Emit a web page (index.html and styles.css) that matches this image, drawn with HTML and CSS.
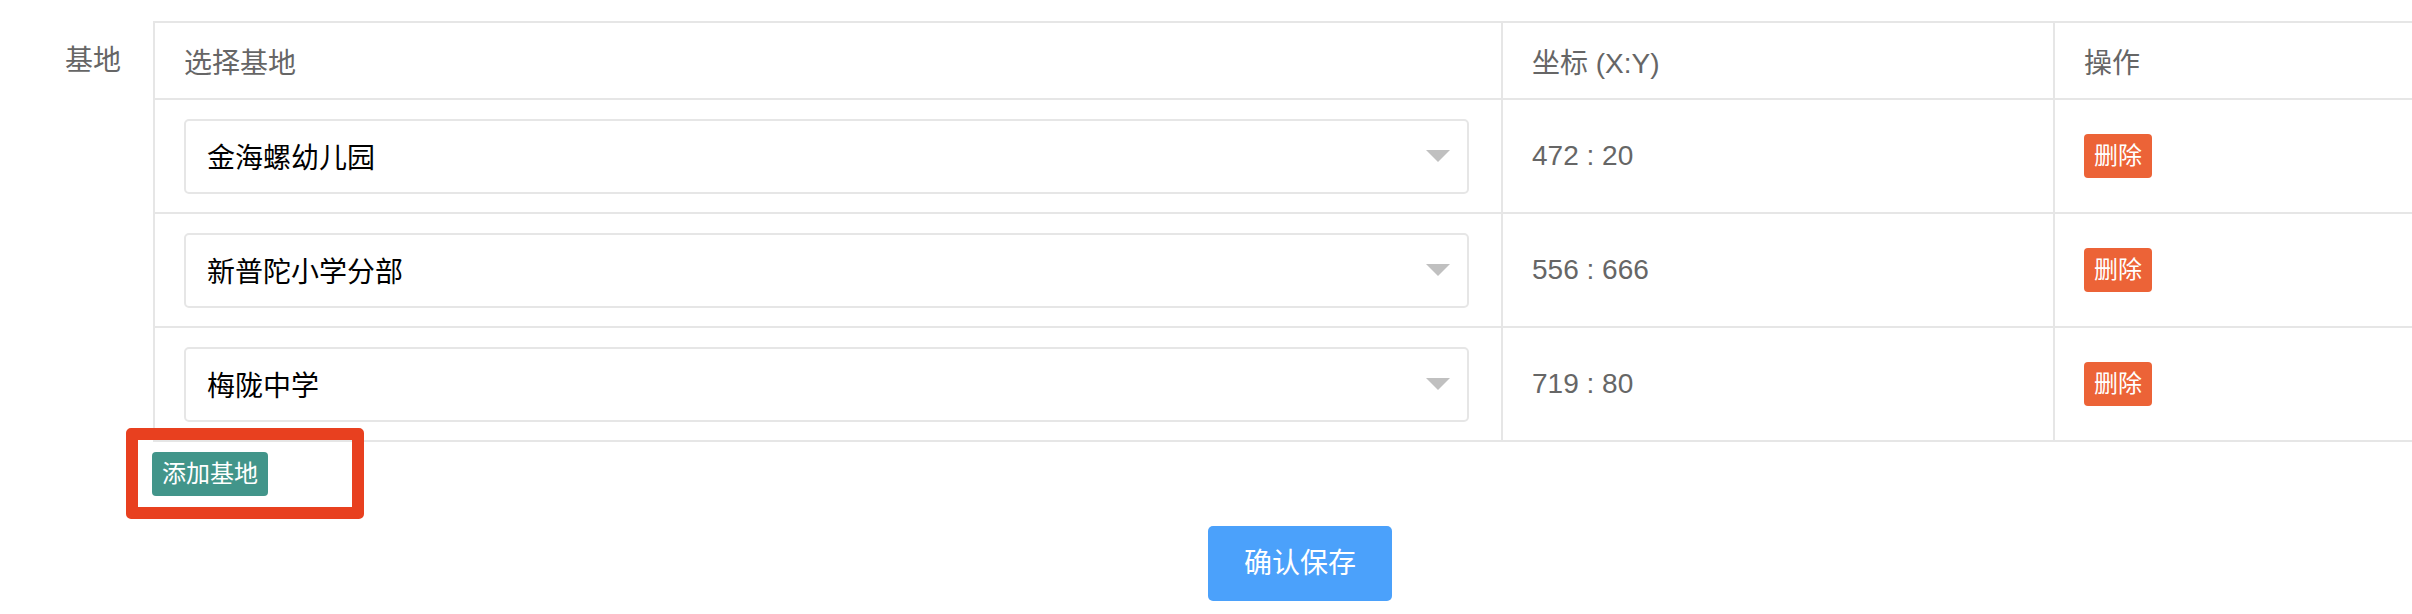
FILE: index.html
```html
<!DOCTYPE html>
<html lang="zh">
<head>
<meta charset="utf-8">
<title>基地</title>
<link rel="stylesheet" href="styles.css">
</head>
<body>
<div class="form-row">
  <div class="form-label">基地</div>
  <div class="form-content">
    <div class="grid">
      <div class="cell head">选择基地</div>
      <div class="cell head">坐标 (X:Y)</div>
      <div class="cell head">操作</div>

      <div class="cell body col-select">
        <div class="select"><span class="select-text">金海螺幼儿园</span><span class="arrow"></span></div>
      </div>
      <div class="cell body coord">472 : 20</div>
      <div class="cell body"><span class="btn btn-del">删除</span></div>

      <div class="cell body col-select">
        <div class="select"><span class="select-text">新普陀小学分部</span><span class="arrow"></span></div>
      </div>
      <div class="cell body coord">556 : 666</div>
      <div class="cell body"><span class="btn btn-del">删除</span></div>

      <div class="cell body col-select">
        <div class="select"><span class="select-text">梅陇中学</span><span class="arrow"></span></div>
      </div>
      <div class="cell body coord">719 : 80</div>
      <div class="cell body"><span class="btn btn-del">删除</span></div>
    </div>

    <div class="add-row">
      <span class="add-wrap">
        <span class="btn btn-add">添加基地</span>
        <span class="highlight"></span>
      </span>
    </div>

    <div class="footer">
      <span class="btn btn-save">确认保存</span>
    </div>
  </div>
</div>
</body>
</html>
```

FILE: styles.css
```css
html, body {
  margin: 0;
  padding: 0;
  overflow: hidden;
  background: #fff;
}

body {
  font-family: "Liberation Sans", "Noto Sans CJK SC", sans-serif;
  font-size: 28px;
  color: #666;
}

.form-row {
  display: flex;
  align-items: flex-start;
  padding-top: 21px;
}

.form-label {
  flex: 0 0 153px;
  box-sizing: border-box;
  padding-right: 32px;
  text-align: right;
  margin-top: 2px;
  height: 75px;
  line-height: 75px;
  color: #666;
}

.form-content {
  flex: 0 0 2294px;
  width: 2294px;
}

.grid {
  display: grid;
  grid-template-columns: 1348px 552px 1fr;
  grid-auto-rows: auto;
  border-top: 2px solid #e6e6e6;
  border-left: 2px solid #e6e6e6;
}

.cell {
  box-sizing: border-box;
  border-right: 2px solid #e6e6e6;
  border-bottom: 2px solid #e6e6e6;
  padding: 0 30px 0 29px;
  display: flex;
  align-items: center;
}

.head {
  height: 77px;
  color: #666;
}

.body {
  height: 114px;
}

.col-select {
  padding-right: 32px;
}

.coord {
  color: #666;
}

.select {
  box-sizing: border-box;
  width: 100%;
  height: 75px;
  border: 2px solid #e6e6e6;
  border-radius: 5px;
  display: flex;
  align-items: center;
  justify-content: space-between;
  padding: 0 17px 0 21px;
  background: #fff;
}

.select-text {
  color: #000;
}

.arrow {
  width: 0;
  height: 0;
  border-left: 12px solid transparent;
  border-right: 12px solid transparent;
  border-top: 12px solid #c0c0c0;
}

.btn {
  display: inline-block;
  color: #fff;
  white-space: nowrap;
}

.btn-del {
  background: #ec6337;
  font-size: 24px;
  height: 44px;
  line-height: 44px;
  padding: 0 10px;
  border-radius: 4px;
}

.add-row {
  margin-top: 10px;
  margin-left: -1px;
  display: flex;
}

.add-wrap {
  position: relative;
  display: inline-block;
}

.btn-add {
  background: #42958a;
  font-size: 24px;
  height: 44px;
  line-height: 44px;
  padding: 0 10px;
  border-radius: 4px;
  vertical-align: top;
}

.highlight {
  position: absolute;
  left: -26px;
  top: -24px;
  right: -96px;
  bottom: -23px;
  border: 12px solid #e8401f;
  border-radius: 5px;
}

.footer {
  margin-top: 30px;
  display: flex;
  justify-content: center;
}

.btn-save {
  background: #4ba1fb;
  font-size: 28px;
  height: 75px;
  line-height: 75px;
  padding: 0 36px;
  border-radius: 5px;
}
```
